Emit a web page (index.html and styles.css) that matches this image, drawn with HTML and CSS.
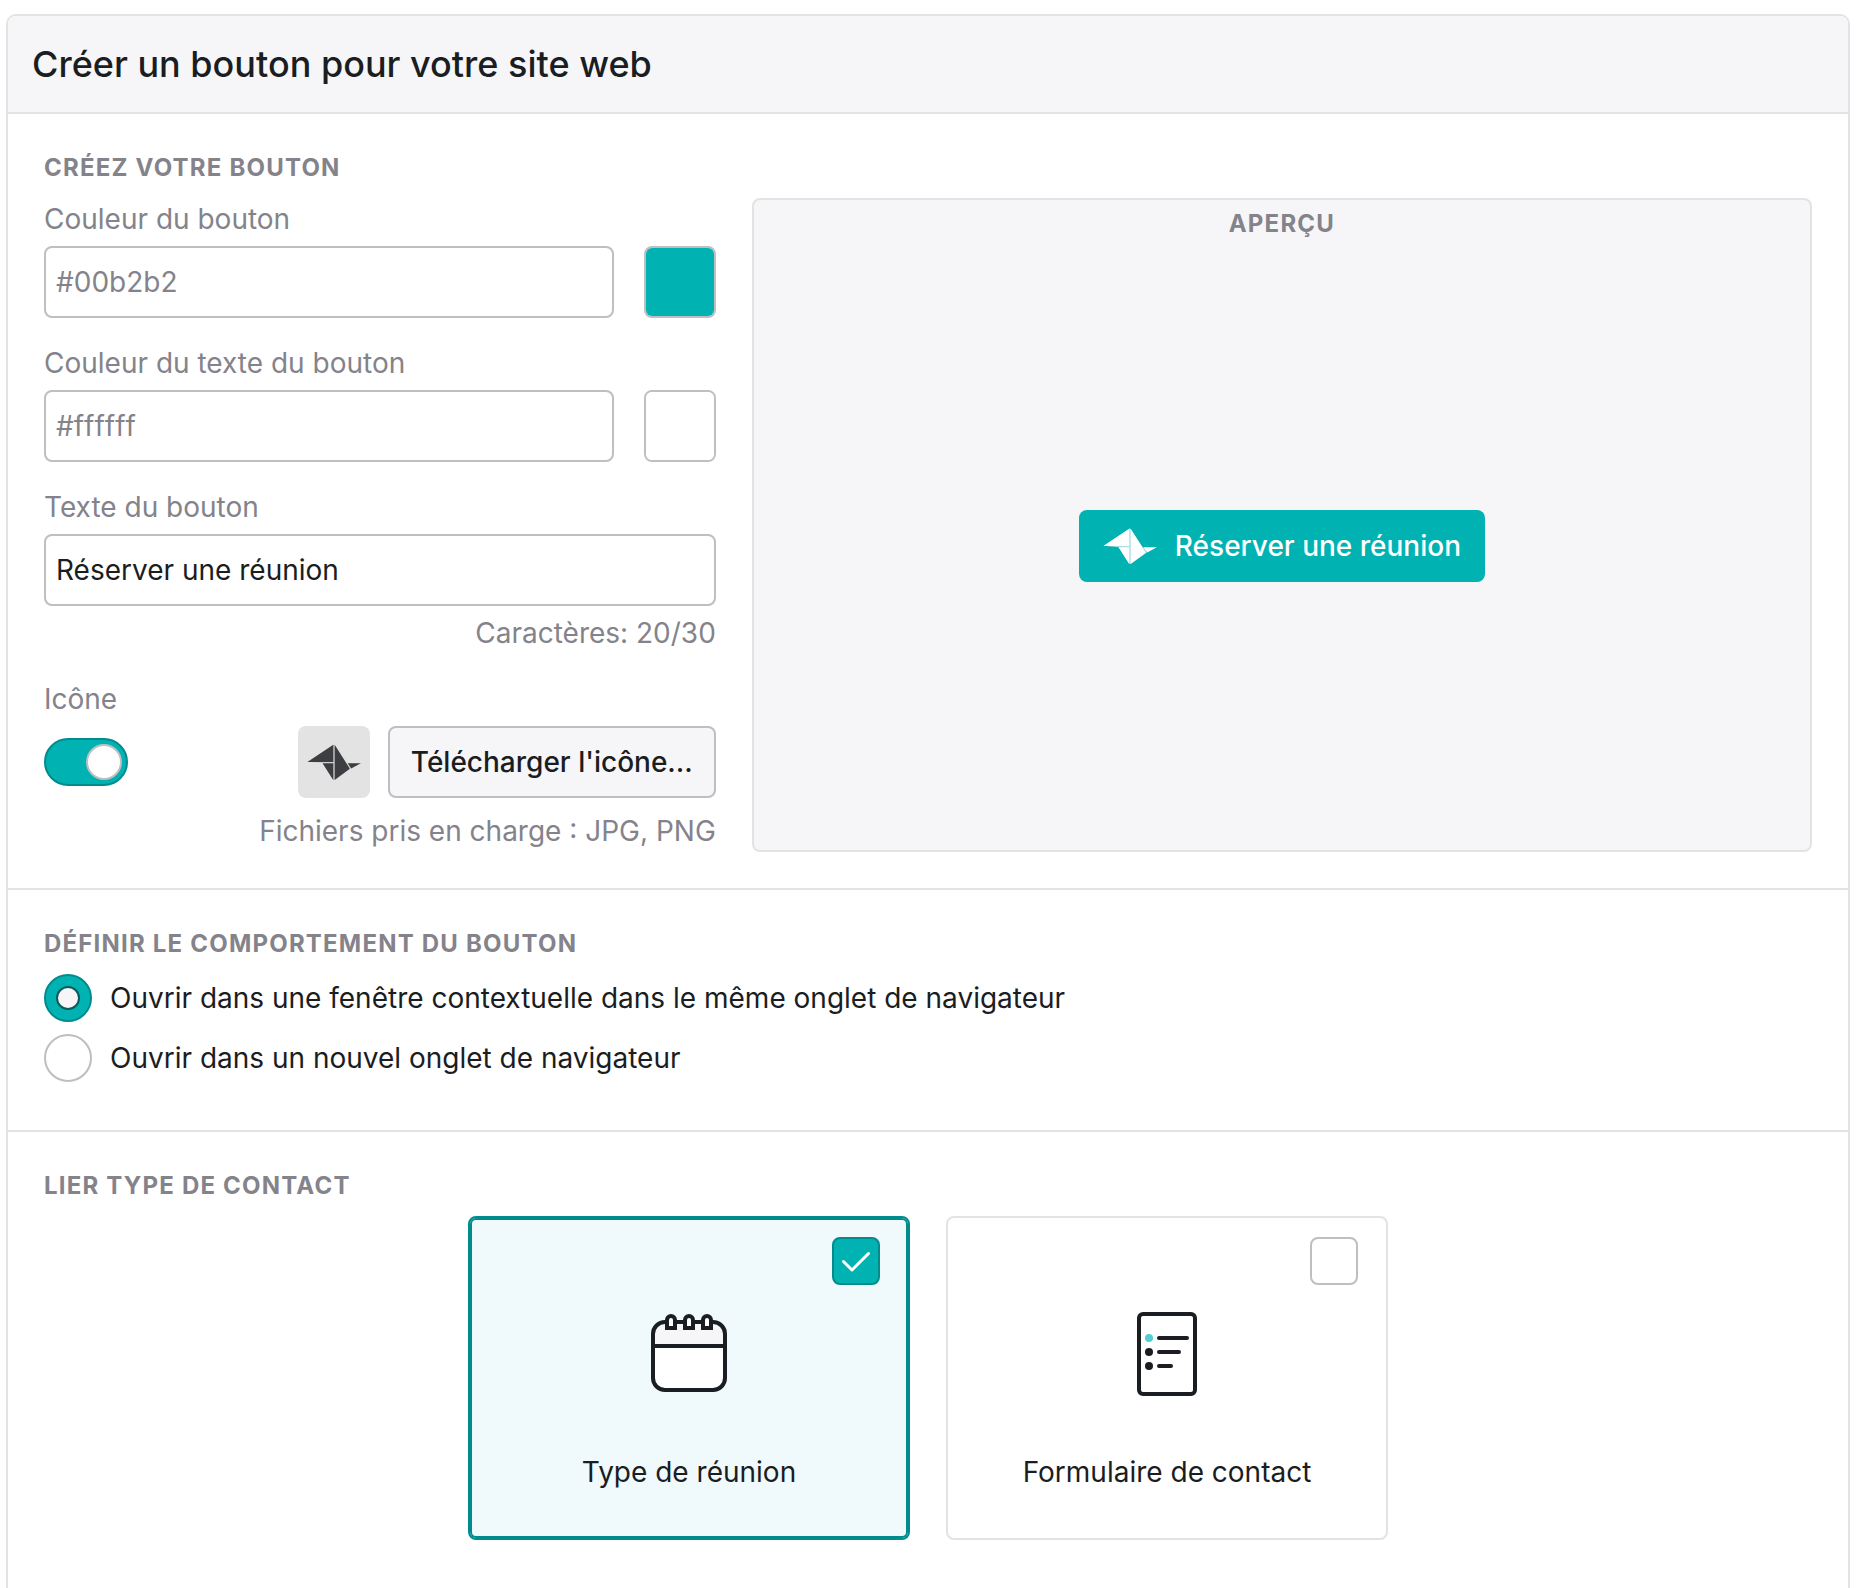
FILE: index.html
```html
<!DOCTYPE html>
<html lang="fr">
<head>
<meta charset="utf-8">
<meta name="viewport" content="width=device-width, initial-scale=1">
<title>Créer un bouton pour votre site web</title>
<link rel="stylesheet" href="styles.css">
</head>
<body>
<svg class="sprite" aria-hidden="true">
  <symbol id="bird" viewBox="78 100 160 110">
    <path class="bird-folds" d="M80 153 158 101 196 157H203L208 173 158 208 124 157Z"/>
    <path d="M79 153.500 156 102V153.500ZM124 157H156V208ZM160 102 205 173.500 160 207ZM199 157H238L209 173Z"/>
  </symbol>
</svg>
<main class="panel">
  <header class="panel-header">
    <h1 class="panel-title">Créer un bouton pour votre site web</h1>
  </header>

  <section class="section">
    <h2 class="section-title">Créez votre bouton</h2>
    <div class="builder">
      <form class="settings">
        <div class="field">
          <label class="field-label" for="button-color">Couleur du bouton</label>
          <div class="color-row">
            <input class="text-input hex" id="button-color" type="text" value="#00b2b2">
            <input class="swatch" type="color" value="#00b2b2" aria-label="Choisir la couleur du bouton">
          </div>
        </div>
        <div class="field">
          <label class="field-label" for="text-color">Couleur du texte du bouton</label>
          <div class="color-row">
            <input class="text-input hex" id="text-color" type="text" value="#ffffff">
            <input class="swatch" type="color" value="#ffffff" aria-label="Choisir la couleur du texte">
          </div>
        </div>
        <div class="field">
          <label class="field-label" for="button-text">Texte du bouton</label>
          <input class="text-input" id="button-text" type="text" maxlength="30" value="Réserver une réunion">
          <p class="hint">Caractères: 20/30</p>
        </div>
        <div class="field">
          <label class="field-label" for="icon-toggle">Icône</label>
          <div class="icon-row">
            <input class="toggle" id="icon-toggle" type="checkbox" role="switch" checked>
            <span class="icon-thumb"><svg class="bird"><use href="#bird"/></svg></span>
            <button class="upload" type="button">Télécharger l'icône...</button>
          </div>
          <p class="hint">Fichiers pris en charge : JPG, PNG</p>
        </div>
      </form>
      <div class="preview">
        <h3 class="section-title preview-title">Aperçu</h3>
        <div class="preview-stage">
          <button class="cta" type="button"><svg class="bird"><use href="#bird"/></svg>Réserver une réunion</button>
        </div>
      </div>
    </div>
  </section>

  <section class="section behaviour">
    <h2 class="section-title">Définir le comportement du bouton</h2>
    <div class="options">
      <label class="option"><input class="radio" type="radio" name="behaviour" checked>Ouvrir dans une fenêtre contextuelle dans le même onglet de navigateur</label>
      <label class="option"><input class="radio" type="radio" name="behaviour">Ouvrir dans un nouvel onglet de navigateur</label>
    </div>
  </section>

  <section class="section links">
    <h2 class="section-title">Lier type de contact</h2>
    <div class="cards">
      <label class="card selected">
        <span class="card-check">
          <input class="checkbox" type="checkbox" checked>
          <svg class="tick" viewBox="0 0 48 48"><path d="M11.500 24.500 20 33 36.500 16.500"/></svg>
        </span>
        <svg class="card-icon" viewBox="0 0 96 96">
          <rect x="12" y="16" width="72" height="68" rx="12" fill="#fff"/>
          <path d="M12 40V28a12 12 0 0 1 12-12h48a12 12 0 0 1 12 12v12Z" fill="#f6f6f8"/>
          <g stroke="#1a1d21" stroke-width="4">
            <rect x="12" y="16" width="72" height="68" rx="12" fill="none"/>
            <path d="M12 40H84"/>
            <path d="M26 22V14a4 4 0 0 1 8 0v8ZM44 22V14a4 4 0 0 1 8 0v8ZM62 22V14a4 4 0 0 1 8 0v8Z" fill="#fff"/>
          </g>
        </svg>
        Type de réunion
      </label>
      <label class="card">
        <span class="card-check">
          <input class="checkbox" type="checkbox">
        </span>
        <svg class="card-icon" viewBox="0 0 96 96">
          <rect x="20" y="8" width="56" height="80" rx="4" fill="#fff" stroke="#1a1d21" stroke-width="4"/>
          <circle cx="30" cy="32" r="4" fill="#50d0d0"/>
          <circle cx="30" cy="46" r="4" fill="#1a1d21"/>
          <circle cx="30" cy="60" r="4" fill="#1a1d21"/>
          <path d="M40 32H68M40 46H60M40 60H52" stroke="#1a1d21" stroke-width="4" stroke-linecap="round"/>
        </svg>
        Formulaire de contact
      </label>
    </div>
  </section>
</main>
</body>
</html>
```
FILE: styles.css
```css
:root {
  --teal: #00b2b2;
  --teal-dark: #008b8d;
  --ink: #1a1d21;
  --gray: #84838b;
  --line: #e3e3e4;
  --control-line: #bebec3;
  --surface: #f6f6f8;
}

*,
*::before {
  box-sizing: border-box;
}

body {
  margin: 0;
  padding: 14px 6px 0;
  background: #fff;
  color: var(--ink);
  font: 28px/40px Inter, "Liberation Sans", sans-serif;
}

h1, h2, h3, p {
  margin: 0;
}

input, button {
  margin: 0;
  font: inherit;
  color: inherit;
}

.sprite {
  display: none;
}

.panel {
  border: 2px solid var(--line);
  border-bottom: 0;
  border-radius: 10px 10px 0 0;
}

.panel-header {
  padding: 24px;
  background: var(--surface);
  border-radius: 8px 8px 0 0;
}

.panel-title {
  font-size: 36px;
  line-height: 48px;
  font-weight: 500;
}

.section {
  padding: 36px;
  border-top: 2px solid var(--line);
}

.behaviour,
.links {
  padding-bottom: 48px;
}

.section-title {
  margin-bottom: 12px;
  color: var(--gray);
  font-size: 24px;
  line-height: 36px;
  font-weight: 700;
  letter-spacing: 0.05em;
  text-transform: uppercase;
}

.builder {
  display: flex;
  gap: 36px;
}

.settings {
  display: flex;
  flex: 0 0 38%;
  flex-direction: column;
  gap: 24px;
}

.field {
  display: flex;
  flex-direction: column;
  gap: 6px;
}

.field-label,
.hint {
  color: var(--gray);
  line-height: 42px;
}

.hint {
  text-align: right;
}

.icon-row + .hint {
  padding-top: 6px;
}

.color-row {
  display: flex;
  gap: 30px;
}

.text-input {
  width: 100%;
  min-width: 0;
  height: 72px;
  padding: 0 10px;
  border: 2px solid var(--control-line);
  border-radius: 8px;
  background: #fff;
}

.hex {
  color: var(--gray);
  font-kerning: none;
}

.swatch {
  flex: none;
  width: 72px;
  height: 72px;
  padding: 0;
  appearance: none;
  overflow: hidden;
  border: 2px solid var(--control-line);
  border-radius: 8px;
  background: none;
}

.swatch::-webkit-color-swatch-wrapper {
  padding: 0;
}

.swatch::-webkit-color-swatch {
  border: 0;
  border-radius: 0;
}

.icon-row {
  display: flex;
  align-items: center;
  gap: 18px;
}

.toggle {
  display: flex;
  align-items: center;
  justify-content: flex-end;
  width: 84px;
  height: 48px;
  margin-right: auto;
  padding-right: 4px;
  appearance: none;
  border: 2px solid var(--teal-dark);
  border-radius: 24px;
  background: var(--teal);
}

.toggle::before {
  content: "";
  width: 36px;
  height: 36px;
  border: 2px solid var(--control-line);
  border-radius: 50%;
  background: #fff;
}

.icon-thumb {
  display: grid;
  place-items: center;
  width: 72px;
  height: 72px;
  border-radius: 8px;
  background: var(--line);
  color: #3d3e42;
}

.bird {
  width: 54px;
  height: 37px;
  fill: currentColor;
}

.bird-folds {
  fill: var(--folds);
}

.icon-thumb .bird {
  --folds: #d0d0d2;
}

.cta .bird {
  --folds: #a6dfe0;
}

.upload {
  width: 328px;
  height: 72px;
  padding: 0;
  border: 2px solid var(--control-line);
  border-radius: 8px;
  background: var(--surface);
  font-weight: 500;
}

.preview {
  display: flex;
  flex: 1;
  flex-direction: column;
  padding-top: 6px;
  border: 2px solid var(--line);
  border-radius: 8px;
  background: var(--surface);
}

.preview-title {
  margin: 0;
  text-align: center;
}

.preview-stage {
  display: grid;
  flex: 1;
  place-items: center;
}

.cta {
  display: flex;
  align-items: center;
  gap: 18px;
  height: 72px;
  padding: 0 24px;
  border: 0;
  border-radius: 8px;
  background: var(--teal);
  color: #fff;
  font-weight: 500;
}

.options {
  display: flex;
  flex-direction: column;
  gap: 12px;
}

.option {
  display: flex;
  align-items: center;
  gap: 18px;
}

.radio {
  display: grid;
  flex: none;
  place-items: center;
  width: 48px;
  height: 48px;
  appearance: none;
  border: 2px solid var(--control-line);
  border-radius: 50%;
  background: #fff;
}

.radio:checked {
  border-color: var(--teal-dark);
  background: var(--teal);
}

.radio:checked::before {
  content: "";
  width: 24px;
  height: 24px;
  border: 2px solid #0b5a5d;
  border-radius: 50%;
  background: var(--surface);
}

.cards {
  display: flex;
  justify-content: center;
  gap: 36px;
}

.card {
  position: relative;
  display: flex;
  flex: 0 1 442px;
  flex-direction: column;
  align-items: center;
  gap: 50px;
  padding: 88px 24px 46px;
  border: 2px solid var(--line);
  border-radius: 8px;
}

.card.selected {
  border-color: var(--teal-dark);
  background: #f0f9fb;
  box-shadow: inset 0 0 0 2px var(--teal-dark);
}

.card-check {
  position: absolute;
  top: 19px;
  right: 28px;
  display: grid;
}

.checkbox,
.tick {
  grid-area: 1 / 1;
  width: 48px;
  height: 48px;
}

.checkbox {
  appearance: none;
  border: 2px solid var(--control-line);
  border-radius: 8px;
  background: #fff;
}

.checkbox:checked {
  border-color: var(--teal-dark);
  background: var(--teal);
}

.tick {
  fill: none;
  stroke: #fff;
  stroke-width: 3;
  stroke-linecap: round;
  stroke-linejoin: round;
  pointer-events: none;
}

.card-icon {
  width: 96px;
  height: 96px;
}
```
